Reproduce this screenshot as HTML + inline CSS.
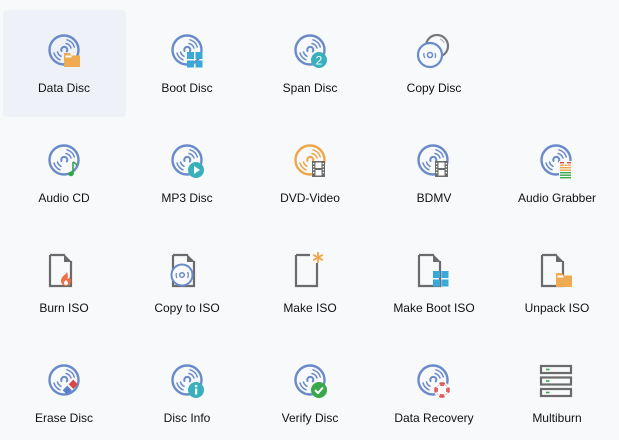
<!DOCTYPE html>
<html><head><meta charset="utf-8"><style>
body{margin:0;width:619px;height:440px;background:#f8f9fb;font-family:"Segoe UI","Liberation Sans",sans-serif;position:relative;overflow:hidden}
.t{position:absolute;width:124px;text-align:center;font-size:12px;color:#111;line-height:14px}
svg.i{position:absolute;width:40px;height:40px;overflow:visible}
.hl{position:absolute;left:3px;top:10px;width:123px;height:107px;background:#eef2f8;border-radius:4px}
</style></head><body>
<div class="hl"></div>
<svg width="0" height="0" style="position:absolute">
<defs>
<g id="d" fill="none" stroke="#6a8bc9" stroke-linecap="round">
<circle cx="20" cy="20" r="14.5" stroke-width="2.4"/>
<path d="M17.5 21 A3 3 0 1 1 22.8 21.5" stroke-width="2"/>
<path d="M22 13.5 A7 7 0 0 1 27 18" stroke-width="1.5"/>
<path d="M23 9.8 A10.5 10.5 0 0 1 30.3 17" stroke-width="1.5"/>
<path d="M13.5 22 A7 7 0 0 0 17 26.3" stroke-width="1.5"/>
<path d="M10 23 A10.5 10.5 0 0 0 16 29.8" stroke-width="1.5"/>
</g>
<g id="do" fill="none" stroke="#eea64a" stroke-linecap="round">
<circle cx="20" cy="20" r="14.5" stroke-width="2.4"/>
<path d="M17.5 21 A3 3 0 1 1 22.8 21.5" stroke-width="2"/>
<path d="M22 13.5 A7 7 0 0 1 27 18" stroke-width="1.5"/>
<path d="M23 9.8 A10.5 10.5 0 0 1 30.3 17" stroke-width="1.5"/>
<path d="M13.5 22 A7 7 0 0 0 17 26.3" stroke-width="1.5"/>
<path d="M10 23 A10.5 10.5 0 0 0 16 29.8" stroke-width="1.5"/>
</g>
<g id="f"><path d="M6 5 H21 M27 11 V36 H6 V5" fill="none" stroke="#6b6b6b" stroke-width="2.2"/><path d="M20 4 L28 12 L20 12Z" fill="#6b6b6b"/></g>
<g id="fl"><path d="M0 0 h6 l1.5 2.5 h8.5 v11.5 h-16z" fill="#eeab52"/><rect x="1.5" y="2.5" width="6" height="2" fill="#fff"/></g>
<g id="win" fill="#3aa8d9"><rect x="0" y="0" width="7" height="7"/><rect x="8.5" y="0" width="7" height="7"/><rect x="0" y="8.5" width="7" height="7"/><rect x="8.5" y="8.5" width="7" height="7"/></g>
<g id="film"><rect x="0" y="0" width="13" height="16" fill="#6b6b6b"/><rect x="3.5" y="1.5" width="6" height="5.5" fill="#fff"/><rect x="3.5" y="9" width="6" height="5.5" fill="#fff"/><g fill="#fff"><rect x="1" y="2" width="1.3" height="1.3"/><rect x="1" y="5" width="1.3" height="1.3"/><rect x="1" y="8" width="1.3" height="1.3"/><rect x="1" y="11" width="1.3" height="1.3"/><rect x="10.7" y="2" width="1.3" height="1.3"/><rect x="10.7" y="5" width="1.3" height="1.3"/><rect x="10.7" y="8" width="1.3" height="1.3"/><rect x="10.7" y="11" width="1.3" height="1.3"/></g></g>
</defs></svg>

<!-- Row 1 -->
<svg class="i" style="left:44px;top:30px"><use href="#d"/><use href="#fl" x="20" y="23"/></svg>
<svg class="i" style="left:167px;top:30px"><use href="#d"/><use href="#win" x="20" y="22"/></svg>
<svg class="i" style="left:290px;top:30px"><use href="#d"/><circle cx="29" cy="30" r="8" fill="#3ab0bd"/><text x="29" y="34.5" font-size="12" fill="#fff" text-anchor="middle" font-family="Liberation Sans">2</text></svg>
<svg class="i" style="left:413px;top:30px"><circle cx="24" cy="16" r="11" fill="none" stroke="#777" stroke-width="2.2"/><path d="M27 9 A7 7 0 0 1 31 13" fill="none" stroke="#bbb" stroke-width="1.3"/><circle cx="17" cy="25" r="12" fill="#f8f9fb" stroke="#6a8bc9" stroke-width="2.2"/><circle cx="17" cy="25" r="2.5" fill="none" stroke="#6a8bc9" stroke-width="1.6"/><path d="M11 23 A6 6 0 0 0 12 28 M22 23 A6 6 0 0 1 22 28" fill="none" stroke="#6a8bc9" stroke-width="1.3"/></svg>

<!-- Row 2 -->
<svg class="i" style="left:44px;top:140px"><use href="#d"/><path d="M29 22 V34" stroke="#2fa84a" stroke-width="1.6"/><path d="M29 22 q3 1 4 4" stroke="#2fa84a" stroke-width="1.6" fill="none"/><ellipse cx="27" cy="34" rx="2.8" ry="2.2" fill="#2fa84a"/></svg>
<svg class="i" style="left:167px;top:140px"><use href="#d"/><circle cx="29" cy="30" r="8" fill="#3ab0bd"/><path d="M27 26 L33 30 L27 34Z" fill="#fff"/></svg>
<svg class="i" style="left:290px;top:140px"><use href="#do"/><use href="#film" x="22" y="21"/></svg>
<svg class="i" style="left:413px;top:140px"><use href="#d"/><use href="#film" x="22" y="21"/></svg>
<svg class="i" style="left:536px;top:140px"><use href="#d"/><g><rect x="23" y="21" width="13" height="17" fill="#f8f9fb"/><rect x="24" y="22" width="4" height="1.4" fill="#d84848"/><rect x="31" y="22" width="4" height="1.4" fill="#d84848"/><rect x="24" y="24.5" width="4" height="1.4" fill="#eea64a"/><rect x="28.5" y="24.5" width="2.5" height="1.4" fill="#eea64a"/><rect x="31.5" y="24.5" width="3.5" height="1.4" fill="#eea64a"/><rect x="24" y="27" width="11" height="1.4" fill="#eea64a"/><rect x="24" y="29.5" width="11" height="1.4" fill="#eea64a"/><rect x="24" y="32" width="11" height="1.4" fill="#3aa84a"/><rect x="24" y="34.5" width="11" height="1.4" fill="#3aa84a"/><rect x="24" y="37" width="11" height="1.4" fill="#3aa84a"/></g></svg>

<!-- Row 3 -->
<svg class="i" style="left:44px;top:250px"><use href="#f"/><path d="M23 22 c-1 3-6 4-6 9 a5 5 0 0 0 10 0 c0-2-1-3-2-4 c0 2-1 2-1.5 2 c0.5-2 0.5-5-0.5-7z" fill="#ee7044"/><path d="M22 30 c-1 1-2 2-2 3 a2 2 0 0 0 4 0 c0-1-1-2-2-3z" fill="#fff"/></svg>
<svg class="i" style="left:167px;top:250px"><use href="#f"/><circle cx="15" cy="25" r="10.5" fill="#f8f9fb" stroke="#6a8bc9" stroke-width="2"/><circle cx="15" cy="25" r="2.3" fill="none" stroke="#6a8bc9" stroke-width="1.5"/><path d="M9.5 23 A6 6 0 0 0 10 28 M20.5 22 A6 6 0 0 1 20.5 28" fill="none" stroke="#6a8bc9" stroke-width="1.3"/></svg>
<svg class="i" style="left:290px;top:250px"><path d="M6 5 H20 M27 13 V36 H6 V5" fill="none" stroke="#6b6b6b" stroke-width="2.2"/><g stroke="#eea64a" stroke-width="1.8"><path d="M28 2 V13"/><path d="M23.2 4.8 L32.8 10.2"/><path d="M23.2 10.2 L32.8 4.8"/></g></svg>
<svg class="i" style="left:413px;top:250px"><use href="#f"/><use href="#win" x="20" y="21"/></svg>
<svg class="i" style="left:536px;top:250px"><use href="#f"/><use href="#fl" x="20" y="23"/></svg>

<!-- Row 4 -->
<svg class="i" style="left:44px;top:360px"><use href="#d"/><rect x="26" y="21" width="6.5" height="6.5" fill="#d84848" transform="rotate(45 29.25 24.25)"/><rect x="20" y="27" width="6.5" height="6.5" fill="#5b7fc9" transform="rotate(45 23.25 30.25)"/></svg>
<svg class="i" style="left:167px;top:360px"><use href="#d"/><circle cx="29" cy="30" r="8" fill="#3ab0bd"/><rect x="28" y="28.5" width="2.2" height="6" fill="#fff"/><circle cx="29.1" cy="26" r="1.3" fill="#fff"/></svg>
<svg class="i" style="left:290px;top:360px"><use href="#d"/><circle cx="29" cy="30" r="8" fill="#3aa84a"/><path d="M25 30 L28 33 L33 27.5" fill="none" stroke="#fff" stroke-width="2"/></svg>
<svg class="i" style="left:413px;top:360px"><use href="#d"/><circle cx="29" cy="30" r="8" fill="#fff"/><circle cx="29" cy="30" r="6" fill="none" stroke="#d84848" stroke-width="3.5" stroke-dasharray="4.7 4.7" stroke-dashoffset="2.3"/><circle cx="29" cy="30" r="6" fill="none" stroke="#e8a0a0" stroke-width="0.6"/></svg>
<svg class="i" style="left:536px;top:360px"><g fill="none" stroke="#6b6b6b" stroke-width="2.2"><rect x="5" y="6" width="30" height="7"/><rect x="5" y="17.5" width="30" height="7"/><rect x="5" y="29" width="30" height="7"/></g><g fill="#3aa84a"><rect x="10" y="8.7" width="3.5" height="1.6"/><rect x="10" y="20.2" width="3.5" height="1.6"/><rect x="10" y="31.7" width="3.5" height="1.6"/></g></svg>

<div class="t" style="left:2px;top:81px">Data Disc</div>
<div class="t" style="left:125px;top:81px">Boot Disc</div>
<div class="t" style="left:248px;top:81px">Span Disc</div>
<div class="t" style="left:372px;top:81px">Copy Disc</div>

<div class="t" style="left:2px;top:191px">Audio CD</div>
<div class="t" style="left:125px;top:191px">MP3 Disc</div>
<div class="t" style="left:248px;top:191px">DVD-Video</div>
<div class="t" style="left:372px;top:191px">BDMV</div>
<div class="t" style="left:495px;top:191px">Audio Grabber</div>

<div class="t" style="left:2px;top:301px">Burn ISO</div>
<div class="t" style="left:125px;top:301px">Copy to ISO</div>
<div class="t" style="left:248px;top:301px">Make ISO</div>
<div class="t" style="left:372px;top:301px">Make Boot ISO</div>
<div class="t" style="left:495px;top:301px">Unpack ISO</div>

<div class="t" style="left:2px;top:411px">Erase Disc</div>
<div class="t" style="left:125px;top:411px">Disc Info</div>
<div class="t" style="left:248px;top:411px">Verify Disc</div>
<div class="t" style="left:372px;top:411px">Data Recovery</div>
<div class="t" style="left:495px;top:411px">Multiburn</div>
</body></html>
